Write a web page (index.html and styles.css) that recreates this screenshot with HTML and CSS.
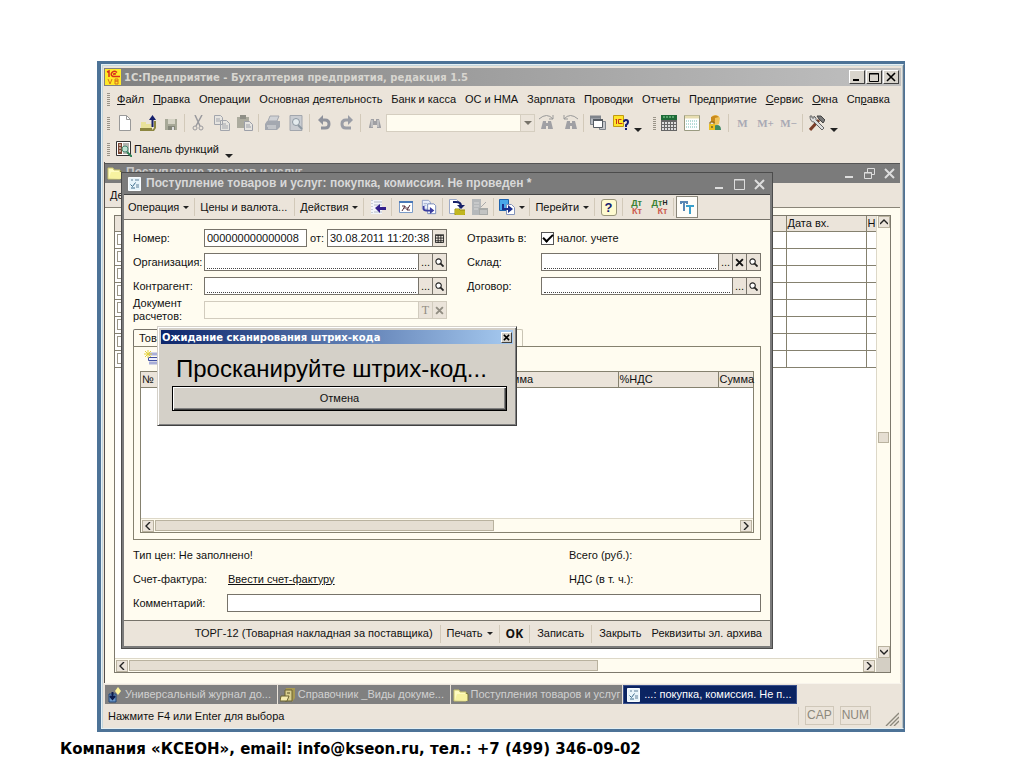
FILE: index.html
```html
<!DOCTYPE html>
<html lang="ru">
<head>
<meta charset="utf-8">
<title>1С:Предприятие - Бухгалтерия предприятия</title>
<link rel="stylesheet" href="styles.css">
</head>
<body>
<svg class="defs" aria-hidden="true">
  <symbol id="doc" viewBox="0 0 16 16"><path d="M1.500 1.500h12v13h-12z" fill="#e8f4fa" stroke="#f8fcff"/><path d="M4 4h2M8 4h4M9 9h3M9 11h3" stroke="#5d7f98"/><path d="M3.500 8.500l2 2 3-4M4 12h4" fill="none" stroke="#3a6a8a"/></symbol>
  <symbol id="folder" viewBox="0 0 16 16"><path d="M1 3h5l1 2h6v9H1z" fill="#fffbc0" stroke="#c9c36a"/><path d="M2 13l2-6h11v7z" fill="#f7f2a0"/><path d="M13 6l2 1v7" fill="none" stroke="#77733a"/></symbol>
  <symbol id="bino" viewBox="0 0 16 16"><path d="M4 4h3v2h2V4h3l2 8v1h-4v-3H6v3H2v-1z" fill="#a0a0a4"/><path d="M5 5v7M11 5v7" stroke="#dcdcdc"/></symbol>
  <symbol id="pages" viewBox="0 0 18 16"><path d="M1.500.500h7l2 2v8h-9z" fill="#e9effa" stroke="#8c9cc4"/><path d="M7.500 4.500h7l2 2v9h-9z" fill="#fff" stroke="#6c82b8"/><path d="M3 4h4M3 6h3" stroke="#a3b0d0"/><path d="M4 7v3q0 1 2 1h4V8l5 4-5 4v-3H6q-4 0-4-3V7z" fill="#3b3da0"/></symbol>
  <symbol id="lens" viewBox="0 0 10 10"><circle cx="4" cy="4" r="3" fill="#fff" stroke="#222" stroke-width="1.200"/><path d="M6 6l3.500 3.500" stroke="#222" stroke-width="2"/></symbol>
  <symbol id="cross" viewBox="0 0 8 8"><path d="M1 1l6 6M7 1L1 7" fill="none" stroke="currentColor" stroke-width="1.700"/></symbol>
  <symbol id="left" viewBox="0 0 8 8"><path d="M6 0L2 4l4 4" fill="none" stroke="#222" stroke-width="1.400"/></symbol>
  <symbol id="right" viewBox="0 0 8 8"><path d="M2 0l4 4-4 4" fill="none" stroke="#222" stroke-width="1.400"/></symbol>
  <symbol id="up" viewBox="0 0 8 8"><path d="M0 6l4-4 4 4" fill="none" stroke="#222" stroke-width="1.400"/></symbol>
  <symbol id="down" viewBox="0 0 8 8"><path d="M0 2l4 4 4-4" fill="none" stroke="#222" stroke-width="1.400"/></symbol>
</svg>

<main class="desktop">
<div class="app">
  <header class="app-title">
    <svg class="logo" viewBox="0 0 16 16"><path d="M0 0h16v16H0z" fill="#ffe928"/><path d="M2 3l2-1v6M12 3.500Q9 1 7 3.500T8 7.500h7M11 5q-3-1-2 1" fill="none" stroke="#d8301c" stroke-width="1.500"/><path d="M3 10l2 5 2-5M10 10h3v2h-3zM10 12h3v3h-3z" fill="none" stroke="#d8701c"/></svg>
    <h1>1С:Предприятие - Бухгалтерия предприятия, редакция 1.5</h1>
    <div class="win-buttons">
      <button aria-label="Свернуть"><svg viewBox="0 0 12 10"><path d="M2 8h6" stroke="#000" stroke-width="2"/></svg></button>
      <button aria-label="Развернуть"><svg viewBox="0 0 12 10"><path d="M1.500 1.500h9v8h-9zM1 2h10" fill="none" stroke="#000"/></svg></button>
      <button aria-label="Закрыть"><svg viewBox="0 0 12 10"><path d="M2 1l8 8M10 1L2 9" stroke="#000" stroke-width="1.600"/></svg></button>
    </div>
  </header>

  <nav class="bar menu">
    <i class="grip"></i>
    <div class="menu-items">
      <button><u>Ф</u>айл</button><button><u>П</u>равка</button><button>Операции</button><button>Основная деятельность</button><button>Банк и касса</button><button>ОС и НМА</button><button>Зарплата</button><button>Проводки</button><button>Отчеты</button><button>Предприятие</button><button><u>С</u>ервис</button><button><u>О</u>кна</button><button>Сп<u>р</u>авка</button>
    </div>
  </nav>

  <div class="bar tools">
    <i class="grip"></i>
    <button class="ib" aria-label="Новый"><svg viewBox="0 0 16 16"><path d="M2.500.500h7l4 4v11h-11z" fill="#fff" stroke="#999"/><path d="M9.500.500v4h4" fill="none" stroke="#999"/></svg></button>
    <button class="ib" aria-label="Открыть"><svg viewBox="0 0 16 16"><path d="M1 7h5v2h6v6H1z" fill="#e9e29a"/><path d="M0 15h12l2-2v-7l2 0v7l-2 3H0z" fill="#8c8640"/><path d="M0 13h12v2H0z" fill="#8c8640"/><path d="M12.500 12V2" stroke="#16206c" stroke-width="2"/><path d="M9 5l3.500-5L16 5z" fill="#16206c"/></svg></button>
    <button class="ib" aria-label="Сохранить"><svg viewBox="0 0 16 16"><path d="M2 4h12v11H2z" fill="#a7a897"/><path d="M5 4h7v5H5z" fill="#d5d3c5"/><path d="M5 11h7v4H5z" fill="#85877a"/><path d="M9 12h2v3H9z" fill="#ddd"/></svg></button>
    <i class="sep"></i>
    <button class="ib" aria-label="Вырезать"><svg viewBox="0 0 16 16"><path d="M4 0l5 11M11 0L5 11" stroke="#9a9a9e" stroke-width="1.500"/><circle cx="4" cy="13" r="2" fill="none" stroke="#9a9a9e"/><circle cx="10" cy="13" r="2" fill="none" stroke="#9a9a9e"/></svg></button>
    <button class="ib" aria-label="Копировать"><svg viewBox="0 0 16 16"><path d="M.500.500h6l2 2v7h-8zM6.500 5.500h6l3 3v7h-9z" fill="#e6e4e0" stroke="#a2a5ac"/><path d="M2 4h4M2 6h4M8 9h4M8 11h6M8 13h6" stroke="#a2a5ac"/></svg></button>
    <button class="ib" aria-label="Вставить"><svg viewBox="0 0 16 16"><path d="M0 2h12v11H0z" fill="#acab9e"/><path d="M3 0h6v4H3z" fill="#8f8f86"/><path d="M7.500 6.500h5l3 3v6h-8z" fill="#e6e4e0" stroke="#9c9fa8"/><path d="M9 10h4M9 12h5" stroke="#9c9fa8"/></svg></button>
    <i class="sep"></i>
    <button class="ib" aria-label="Печать"><svg viewBox="0 0 16 16"><path d="M5 1h9l-2 5H3z" fill="#d0d2d6" stroke="#a4a7ae"/><path d="M2 6h13v6l-3 3H0V9z" fill="#a4a8b0"/><path d="M2 11h9M3 13h8" stroke="#e0e0e0"/></svg></button>
    <button class="ib" aria-label="Просмотр"><svg viewBox="0 0 16 16"><path d="M2 .500h12v15H2z" fill="#c9ccd1" stroke="#a2a6ad"/><circle cx="8" cy="7" r="3.500" fill="#e4ebee" stroke="#8d98a2"/><path d="M10 10l4 4" stroke="#8d98a2" stroke-width="2"/></svg></button>
    <i class="sep"></i>
    <button class="ib" aria-label="Отменить"><svg viewBox="0 0 16 16"><path d="M5 5h4q4 0 4 4t-4 4H5" fill="none" stroke="#8f929c" stroke-width="3"/><path d="M7 0v10L2 5z" fill="#8f929c"/></svg></button>
    <button class="ib" aria-label="Вернуть"><svg viewBox="0 0 16 16"><path d="M10 5H7Q3 5 3 9t4 4h5" fill="none" stroke="#9a9da6" stroke-width="3"/><path d="M9 0v10l5-5z" fill="#9a9da6"/></svg></button>
    <i class="sep"></i>
    <button class="ib" aria-label="Найти"><svg><use href="#bino"/></svg></button>
    <div class="combo"><input type="text" aria-label="Поиск"><button aria-label="Список"><i class="tri"></i></button></div>
    <button class="ib" aria-label="Найти следующий"><svg viewBox="0 0 16 16"><path d="M0 4q8-7 14 0M14 0v4h-4" fill="none" stroke="#999"/><path d="M4 6h3v2h2V6h3l2 8H9v-3H7v3H2z" fill="#a0a0a4"/></svg></button>
    <button class="ib" aria-label="Найти предыдущий"><svg viewBox="0 0 16 16"><path d="M16 4q-8-7-14 0M2 0v4h4" fill="none" stroke="#999"/><path d="M5 6h3v2h2V6h3l2 8h-5v-3H8v3H3z" fill="#a0a0a4"/></svg></button>
    <i class="sep"></i>
    <button class="ib" aria-label="Окна"><svg viewBox="0 0 16 16"><path d="M.500 1.500h10v8H.500z" fill="#b6bac0" stroke="#80858c"/><path d="M0 2h11" stroke="#80858c" stroke-width="3"/><path d="M9.500 6.500h6v8h-6z" fill="#c6c8cc" stroke="#80858c"/><path d="M3.500 4.500h9v8h-9z" fill="#fff" stroke="#555b62"/><path d="M3 5h10" stroke="#555b62" stroke-width="2"/></svg></button>
    <button class="ib" aria-label="Справка 1С"><svg viewBox="0 0 16 16"><path d="M.500.500h10v11h-10z" fill="#ffe52a" stroke="#c09a10"/><path d="M2.500 5l1-1v5M8.500 4.500h-3v4h4" fill="none" stroke="#c8301c"/><path d="M11 7q0-2 2-2t2 2-2 3v2M13 13v2" fill="none" stroke="#141c70" stroke-width="2"/></svg></button>
    <i class="tri low"></i>
    <i class="grip second"></i>
    <button class="ib" aria-label="Калькулятор"><svg viewBox="0 0 16 16"><path d="M0 0h16v16H0z" fill="#666"/><path d="M0 0h16v5H0z" fill="#1f6a38"/><path d="M2 2h12" stroke="#8fe0a0" stroke-dasharray="2 1"/><path d="M1 8h14M1 11h14M1 14h14" stroke="#ddd" stroke-width="2" stroke-dasharray="2 1"/></svg></button>
    <button class="ib" aria-label="Календарь"><svg viewBox="0 0 16 16"><path d="M.500.500h15v15H.500z" fill="#fff" stroke="#999a80"/><path d="M1 2h14" stroke="#e7ddb0" stroke-width="3"/><path d="M2 6h12M2 9h12M2 12h12" stroke="#6fbcb0" stroke-dasharray="1 1"/></svg></button>
    <button class="ib" aria-label="Пользователь"><svg viewBox="0 0 16 16"><path d="M5 1q5-3 8 2l-1 6-4 2z" fill="#f1c45c"/><path d="M4 2q5-3 8 0l-4 1v5l-4-1z" fill="#c98a1c"/><path d="M6 15q0-5 4-5t4 5z" fill="#3f8a62"/><path d="M2 9h6v6H2z" fill="#ecc020"/><path d="M3 9V7h4v2" fill="none" stroke="#88600c"/><path d="M5 11v2" stroke="#333"/></svg></button>
    <i class="sep"></i>
    <button class="ib mem">M</button><button class="ib mem">M+</button><button class="ib mem">M−</button>
    <i class="sep"></i>
    <button class="ib" aria-label="Сервис"><svg viewBox="0 0 16 16"><path d="M1 15L10 5" stroke="#7a3d28" stroke-width="3"/><path d="M8 1h4l4 4-2 3-4-4z" fill="#777" stroke="#444"/><path d="M1 1l2 0 0 2 2 0 0-2q3 2 2 4l8 8-2 2-8-8q-4 0-4-6z" fill="#ddd" stroke="#666"/></svg></button>
    <i class="tri low"></i>
  </div>

  <div class="bar panel-bar">
    <i class="grip"></i>
    <button class="panel-button"><svg viewBox="0 0 16 16"><path d="M.500.500h14v14H.500z" fill="#fff" stroke="#333"/><path d="M2 2h4v11H2z" fill="#7a4632"/><path d="M4 3v9" stroke="#fff" stroke-dasharray="2 1"/><path d="M7 2h6v11H7z" fill="#b5b5b0"/><circle cx="9" cy="8" r="3" fill="#bfe4d2" stroke="#4a8a74"/><path d="M11 11l5 5" stroke="#2d7f54" stroke-width="2"/></svg><span>Панель функций</span></button>
    <i class="tri low"></i>
  </div>

  <section class="mdi">
    <div class="child">
      <header class="child-title">
        <svg class="ico"><use href="#folder"/></svg>
        <h2>Поступление товаров и услуг</h2>
        <button aria-label="Свернуть"><svg viewBox="0 0 12 12"><path d="M2 10h8" stroke="#ddd" stroke-width="2"/></svg></button>
        <button aria-label="Восстановить"><svg viewBox="0 0 12 12"><path d="M1.500 5.500h7v6h-7zM4.500 5V1.500h7v6H9M1 6h8" fill="none" stroke="#ddd"/></svg></button>
        <button aria-label="Закрыть"><svg viewBox="0 0 12 12"><path d="M2 2l9 9M11 2l-9 9" stroke="#ddd" stroke-width="2"/></svg></button>
      </header>
      <div class="child-tools"><button>Действия</button></div>
      <div class="child-body">
        <div class="list">
          <div class="list-area">
            <table class="rows">
              <thead><tr><th class="c-main"></th><th class="c-date">Дата вх.</th><th class="c-num">Н</th></tr></thead>
              <tbody>
                <tr><td><i class="mark"></i></td><td></td><td></td></tr>
                <tr><td><i class="mark"></i></td><td></td><td></td></tr>
                <tr><td><i class="mark"></i></td><td></td><td></td></tr>
                <tr><td><i class="mark"></i></td><td></td><td></td></tr>
                <tr><td><i class="mark"></i></td><td></td><td></td></tr>
                <tr><td><i class="mark"></i></td><td></td><td></td></tr>
                <tr><td><i class="mark"></i></td><td></td><td></td></tr>
                <tr><td><i class="mark"></i></td><td></td><td></td></tr>
              </tbody>
            </table>
          </div>
          <div class="vscroll"><button aria-label="Вверх"><svg><use href="#up"/></svg></button><i class="thumb"></i><button aria-label="Вниз"><svg><use href="#down"/></svg></button></div>
          <div class="hscroll"><button aria-label="Влево"><svg><use href="#left"/></svg></button><div class="track"><i class="thumb wide"></i></div><button aria-label="Вправо"><svg><use href="#right"/></svg></button></div>
          <i class="corner"></i>
        </div>
      </div>
    </div>

    <section class="docwin">
      <header class="doc-title">
        <svg class="ico"><use href="#doc"/></svg>
        <h2>Поступление товаров и услуг: покупка, комиссия. Не проведен *</h2>
        <button aria-label="Свернуть"><svg viewBox="0 0 12 12"><path d="M2 10h8" stroke="#ddd" stroke-width="2"/></svg></button>
        <button aria-label="Развернуть"><svg viewBox="0 0 12 12"><path d="M1.500 1.500h10v10h-10zM1 2h11" fill="none" stroke="#ddd"/></svg></button>
        <button aria-label="Закрыть"><svg viewBox="0 0 12 12"><path d="M2 2l9 9M11 2l-9 9" stroke="#ddd" stroke-width="2"/></svg></button>
      </header>
      <div class="doc-tools">
        <button>Операция<i class="tri"></i></button><i class="sep"></i>
        <button class="w-price">Цены и валюта...</button><i class="sep"></i>
        <button>Действия<i class="tri"></i></button><i class="sep"></i>
        <button class="ic" aria-label="Журнал"><svg viewBox="0 0 16 16"><path d="M1 1h11v14H1z" fill="#f4f6fa"/><path d="M2 1v14" stroke="#9aa4b4" stroke-dasharray="1 2"/><path d="M4 3h8M4 6h8M4 13h8" stroke="#b2bac8"/><path d="M5 9l5-4v3h6v3h-6v3z" fill="#33208c"/></svg></button><i class="sep"></i>
        <button class="ic" aria-label="Обновить"><svg viewBox="0 0 16 16"><path d="M1.500 2.500h13v11h-13z" fill="#fff" stroke="#7c9cc8"/><path d="M1 3h14" stroke="#4a78b8" stroke-width="2"/><path d="M4 7h3v3M9 8v3h3M7 7l-3 5M9 11l3-5" fill="none" stroke="#5a3040"/></svg></button>
        <button class="ic" aria-label="Скопировать"><svg><use href="#pages"/></svg></button><i class="sep"></i>
        <button class="ic" aria-label="Провести"><svg viewBox="0 0 16 16"><path d="M.500.500h7l3 3v11H.500z" fill="#fff" stroke="#9aa8c8"/><path d="M4 3h3q5 0 5 4" fill="none" stroke="#162068" stroke-width="2"/><path d="M8 6h8l-4 4z" fill="#162068"/><path d="M6 10h4l1 1h5v5H6z" fill="#e8dc30" stroke="#9a9010"/><path d="M7 12h8M7 14h8" stroke="#9a9010"/></svg></button>
        <button class="ic" aria-label="Отмена проведения"><svg viewBox="0 0 16 16"><path d="M0 0h9v16H0z" fill="#b5b8ba"/><path d="M2 4h5M2 7h5M2 10h4" stroke="#d8d8d8"/><path d="M7 9h9v7H7z" fill="#a8aaa8"/><path d="M8 12h7M8 14h7" stroke="#ddd"/><path d="M9 8l5-5" stroke="#aaa"/></svg></button><i class="sep"></i>
        <button class="ic drop" aria-label="Ввести на основании"><svg viewBox="0 0 16 16"><path d="M.500.500h9v11h-9z" fill="#49a8ea" stroke="#1c62ae"/><path d="M7.500 5.500h5l3 3v7h-8z" fill="#fff" stroke="#8494bc"/><path d="M3 5h2v4h4V6l5 4-5 4v-3H3z" fill="#1b2f8c"/></svg><i class="tri"></i></button><i class="sep"></i>
        <button>Перейти<i class="tri"></i></button><i class="sep"></i>
        <button class="ic" aria-label="Справка"><span class="help">?</span></button><i class="sep"></i>
        <button class="ic dk"><b>Дт</b><em>Кт</em></button>
        <button class="ic dk"><b>Дт<span>Н</span></b><em>Кт</em></button><i class="sep"></i>
        <button class="tt" aria-label="Табло"><svg viewBox="0 0 16 16"><path d="M1 3h8M5 3v9M2 3v2M8 3v2" fill="none" stroke="#5a87b4" stroke-width="2"/><path d="M7 7h8M11 7v8" fill="none" stroke="#3aa0cc" stroke-width="2"/></svg></button>
      </div>

      <div class="doc-body">
        <div class="form">
          <label for="num">Номер:</label>
          <div class="pair">
            <input id="num" class="box num" type="text" value="000000000000008">
            <label for="date">от:</label>
            <div class="field date"><input id="date" type="text" value="30.08.2011 11:20:38"><button aria-label="Календарь"><svg viewBox="0 0 10 10"><path d="M.500 1.500h9v8h-9zM0 1h10M3.500 1v9M6.500 1v9M0 4.500h10M0 7.500h10" fill="none" stroke="#222"/></svg></button></div>
          </div>
          <span class="lbl">Отразить в:</span>
          <label class="check"><input type="checkbox" checked>налог. учете</label>

          <label for="org">Организация:</label>
          <div class="field req"><input id="org" type="text"><button>...</button><button aria-label="Открыть"><svg><use href="#lens"/></svg></button></div>
          <label for="store">Склад:</label>
          <div class="field req"><input id="store" type="text"><button>...</button><button aria-label="Очистить"><svg><use href="#cross"/></svg></button><button aria-label="Открыть"><svg><use href="#lens"/></svg></button></div>

          <label for="agent">Контрагент:</label>
          <div class="field req"><input id="agent" type="text"><button>...</button><button aria-label="Открыть"><svg><use href="#lens"/></svg></button></div>
          <label for="deal">Договор:</label>
          <div class="field req"><input id="deal" type="text"><button>...</button><button aria-label="Открыть"><svg><use href="#lens"/></svg></button></div>

          <label for="calc" class="two">Документ расчетов:</label>
          <div class="field off"><input id="calc" type="text" disabled><button class="t">T</button><button aria-label="Очистить"><svg><use href="#cross"/></svg></button></div>
        </div>

        <div class="tabs"><button class="tab on">Товары</button><button class="tab rest" aria-label="Дополнительно"></button></div>
        <div class="sheet">
          <div class="sheet-tools"><button aria-label="Добавить"><svg viewBox="0 0 16 16"><path d="M5 4h11M5 13h11" stroke="#a9aed8" stroke-width="3"/><path d="M4.500 7.500h12v3h-12z" fill="#eef" stroke="#4050a0"/><path d="M4 0v8M0 4h8M1 1l6 6M7 1L1 7" stroke="#e5d23a"/></svg></button></div>
          <div class="grid-box">
            <table class="goods"><thead><tr><th class="g-n">№</th><th class="g-name"></th><th class="g-sum">Сумма</th><th class="g-vat">%НДС</th><th>Сумма</th></tr></thead></table>
            <div class="hscroll"><button aria-label="Влево"><svg><use href="#left"/></svg></button><div class="track"><i class="thumb half"></i></div><button aria-label="Вправо"><svg><use href="#right"/></svg></button></div>
          </div>
        </div>

        <div class="totals">
          <span>Тип цен: Не заполнено!</span><span>Всего (руб.):</span>
          <span class="inv"><span>Счет-фактура:</span><a href="#invoice">Ввести счет-фактуру</a></span><span>НДС (в т. ч.):</span>
        </div>
        <div class="comment"><label for="note">Комментарий:</label><input id="note" class="box" type="text"></div>
      </div>
      <footer class="doc-foot">
        <button>ТОРГ-12 (Товарная накладная за поставщика)</button><i class="sep"></i>
        <button class="print">Печать<i class="tri"></i></button><i class="sep"></i>
        <button class="ok">OK</button><i class="sep"></i>
        <button>Записать</button><i class="sep"></i>
        <button>Закрыть</button>
        <button>Реквизиты эл. архива</button>
      </footer>
    </section>

    <section class="modal" role="dialog" aria-label="Ожидание сканирования штрих-кода">
      <header class="modal-title"><h2>Ожидание сканирования штрих-кода</h2><button aria-label="Закрыть"><svg><use href="#cross"/></svg></button></header>
      <div class="modal-body">
        <p>Просканируйте штрих-код...</p>
        <button class="cancel">Отмена</button>
      </div>
    </section>
  </section>

  <nav class="tasks">
    <button><svg viewBox="0 0 16 16"><path d="M2 7h7v8H2z" fill="#6a96c8" stroke="#244878"/><path d="M5.500 5v6M3 9l2.500 3L8 9" fill="none" stroke="#0c1c4c" stroke-width="2"/><path d="M11 0l3 4-3 4-3-4z" fill="#fff69a"/></svg><span>Универсальный журнал до...</span></button>
    <button><svg viewBox="0 0 16 16"><path d="M6 1h9v10l-3 4V4H5z" fill="#a89a52"/><path d="M5 3h7v11H5z" fill="#d9cf8e" stroke="#6a6230"/><path d="M1 9h8l-2 5H0z" fill="#f4ecb0" stroke="#6a6230"/><path d="M7 6h3" stroke="#554e20"/></svg><span>Справочник _Виды докуме...</span></button>
    <button><svg><use href="#folder"/></svg><span>Поступления товаров и услуг</span></button>
    <button class="active"><svg><use href="#doc"/></svg><span>...: покупка, комиссия. Не п...</span></button>
  </nav>
  <footer class="status">
    <span class="hint">Нажмите F4 или Enter для выбора</span><span class="key">CAP</span><span class="key">NUM</span>
    <svg class="size-grip" viewBox="0 0 14 14"><path d="M1 14L14 1M5 14l9-9M9 14l5-5" stroke="#8c887c" stroke-width="1.400"/></svg>
  </footer>
</div>
</main>
<p class="caption">Компания «КСЕОН», email: info@kseon.ru, тел.: +7 (499) 346-09-02</p>
</body>
</html>
```
FILE: styles.css
```css
* { box-sizing: border-box; }
body { margin: 0; background: #fff; color: #111; font: 11px/13px "Liberation Sans", Arial, sans-serif; }
button { margin: 0; padding: 0; border: 0; background: none; font: inherit; color: inherit; display: flex; align-items: center; justify-content: center; white-space: nowrap; }
input { font: inherit; color: inherit; margin: 0; min-width: 0; }
h1, h2, p { margin: 0; font-size: 11px; white-space: nowrap; }
svg { width: 16px; height: 16px; flex: none; display: block; }
.defs { display: none; }

.desktop { margin: 61px 119px 0 97px; padding: 3px 1px 3px 4px; background: #4d7397; }
.app { background: #ebe4da; border: 1px solid #e4f0f4; border-right-color: #66798c; padding: 3px 2px 0; box-shadow: inset 1px 1px #c4d6dc, inset -1px 0 #b8c6cc; }

.app-title { display: flex; align-items: center; gap: 3px; height: 18px; padding: 0 2px 0 1px; background: linear-gradient(90deg, #808080, #c0c0c0); color: #d8d6d0; }
.app-title h1 { flex: 1; font: bold 10px/13px "DejaVu Sans", Verdana, sans-serif; }
.win-buttons { display: flex; gap: 1px; }
.win-buttons button { width: 16px; height: 14px; background: #d8d4cc; border: 1px solid; border-color: #fff #404040 #404040 #fff; }
.win-buttons svg { width: 12px; height: 10px; }

.bar { display: flex; align-items: center; height: 25px; }
.grip { width: 3px; height: 13px; margin: 0 6px 0 3px; flex: none; background: repeating-linear-gradient(#9a9488 0 1px, transparent 1px 2px); }
.tools .grip { margin-right: 3px; }
.tools .grip.second { margin: 0 1px 0 9px; }
.menu { padding-top: 1px; }
.menu-items { flex: 1; display: flex; justify-content: space-between; padding: 0 11px 0 1px; }
.tools { padding-bottom: 1px; }
.ib { width: 23px; height: 22px; flex: none; }
.sep { width: 1px; height: 18px; margin: 0 2px; flex: none; background: #d2c9b9; }
.tri { border: solid transparent; border-width: 3px 3px 0; border-top-color: #222; width: 0; height: 0; flex: none; }
.tri.low { border-width: 4px 4px 0; margin: 14px 2px 0; }
.combo { display: flex; width: 149px; height: 18px; border: 1px solid #d5cec0; background: #fffcf0; }
.combo input { flex: 1; border: 0; padding: 0; background: none; }
.combo button { width: 14px; background: #ebe4da; border-left: 1px solid #d5cec0; }
.combo .tri { border-width: 4px 4px 0; border-top-color: #77736a; }
.mem { font: bold 11px/13px "Liberation Serif", serif; color: #a9a9b4; }
.panel-bar { height: 26px; }
.panel-button { gap: 2px; }
.panel-bar .tri { margin-left: 6px; }

.mdi { position: relative; height: 521px; padding: 1px 1px 0 0; border-left: 1px solid #55504c; }
.child { height: 100%; display: flex; flex-direction: column; background: #fffcf0; }
.child-title { height: 20px; background: #7b7b7b; border-top: 1px solid #555; display: flex; align-items: center; gap: 8px; padding: 0 5px 2px 2px; color: #c8c8c8; }
.child-title h2 { flex: 1; margin-left: -5px; font-size: 12px; }
.child-title svg, .doc-title svg { width: 12px; height: 12px; }
.child-title .ico, .doc-title .ico { width: 16px; height: 16px; }
.child-tools { height: 25px; background: #ebe4da; border-bottom: 1px solid #8a8578; display: flex; align-items: center; padding-left: 5px; }
.child-body { flex: 1; display: flex; padding: 7px 9px 10px 9px; }
.list { flex: 1; display: grid; grid-template-columns: 1fr 14px; grid-template-rows: 1fr 14px; border: 1px solid #7d796c; background: #fff; }
.list-area { overflow: hidden; }
.rows, .goods { border-collapse: collapse; table-layout: fixed; width: 100%; }
.rows th { height: 15px; }
.rows td { height: 17px; padding: 0 0 0 2px; border: 1px solid #85816f; border-left-width: 0; border-right-width: 1px; }
.rows th, .goods th { background: #ebe4da; font-weight: normal; text-align: left; padding: 0 0 0 1px; border-right: 1px solid #85816f; border-bottom: 1px solid #85816f; white-space: nowrap; }
.rows th:last-child, .rows td:last-child, .goods th:last-child { border-right: 0; }
.c-date { width: 80px; }
.c-num { width: 10px; }
.mark { display: block; width: 9px; height: 11px; border: 1px solid #9a9686; }
.vscroll { display: flex; flex-direction: column; justify-content: space-between; align-items: center; background: #fffcf0; border-left: 1px solid #ddd8c8; }
.vscroll button, .hscroll button { width: 12px; height: 12px; background: #ebe4da; border: 1px solid #b9b29f; flex: none; }
.vscroll svg, .hscroll svg { width: 8px; height: 8px; }
.thumb { display: block; width: 11px; height: 11px; background: #e5ded2; border: 1px solid #b9b29f; }
.hscroll { display: flex; align-items: center; gap: 1px; padding: 0 1px; height: 14px; background: #fffcf0; border-top: 1px solid #ddd8c8; }
.track { flex: 1; }
.thumb.wide { width: 64%; }
.thumb.half { width: 58%; }
.corner { background: #d4cfc4; }

.docwin { position: absolute; left: 16px; top: 10px; width: 652px; background: #fffcf0; border: 3px solid #7b7b7b; border-top-width: 1px; border-top-color: #c8c8c8; outline: 1px solid #4c4c4c; outline-offset: -1px; }
.doc-title { height: 22px; background: #7b7b7b; display: flex; align-items: center; gap: 8px; padding: 0 5px 0 3px; color: #d8d8d8; border-bottom: 1px solid #444; }
.doc-title h2 { flex: 1; margin-left: -5px; font-size: 12px; }
.doc-tools { height: 25px; display: flex; align-items: center; background: #ebe4da; border-bottom: 1px solid #77736a; padding-left: 1px; }
.doc-tools button { padding: 0 3px; gap: 4px; }
.doc-tools .w-price { padding-right: 5px; }
.doc-tools .ic { width: 23px; height: 22px; }
.doc-tools .drop { width: 31px; }
.help { width: 16px; height: 17px; border: 1px solid #99957a; border-radius: 3px; background: #fffbd0; color: #141c70; font: bold 13px/15px "Liberation Sans", sans-serif; text-align: center; }
.doc-tools .dk { display: grid; gap: 0; padding: 0; align-content: center; font: bold 9px/8px "Liberation Sans", sans-serif; }
.dk b { color: #3a8034; text-align: left; }
.dk em { font-style: normal; color: #cc5b4e; text-align: right; }
.dk span { color: #222; font-size: 7px; vertical-align: top; }
.doc-tools .tt { width: 22px; height: 22px; background: #fffdf8; border: 1px solid #8a867a; padding: 0; }

.doc-body { padding: 9px 9px 8px 9px; }
.form { display: grid; grid-template-columns: 71px 243px 94px 1fr; row-gap: 6px; grid-auto-rows: 18px; align-items: center; }
.form > :nth-child(4n+3) { margin-left: 20px; white-space: nowrap; }
.two { width: 56px; }
.pair { display: flex; align-items: center; justify-content: space-between; }
.box { height: 18px; border: 1px solid #77736a; background: #fff; padding: 0 2px; }
.num { width: 103px; }
.field { display: flex; height: 18px; border: 1px solid #77736a; background: #fff; }
.field input { flex: 1; border: 0; padding: 0 2px; background: none; }
.field.req input { border-bottom: 1px dotted #444; margin: 0 2px 1px; }
.field button { width: 14px; flex: none; background: #ebe4da; border-left: 1px solid #77736a; }
.field svg { width: 9px; height: 9px; }
.date { width: 120px; }
.field.off { border-color: #d2ccbe; background: #fffcf0; color: #918d82; }
.field.off button { border-color: #d2ccbe; }
.field .t { font: 12px/13px "Liberation Serif", serif; }
.check { display: flex; align-items: center; gap: 3px; }
.check input { appearance: none; width: 13px; height: 13px; border: 1px solid #555; background: #fff; display: grid; place-items: center; }
.check input:checked::before { content: ""; width: 8px; height: 4px; border: solid #000; border-width: 0 0 2px 2px; transform: rotate(-45deg); margin-bottom: 3px; }

.tabs { display: flex; height: 17px; margin-top: 10px; }
.tab { border: 1px solid #a9a493; border-bottom: 0; border-radius: 2px 2px 0 0; padding: 0 5px; }
.tab.on { border-color: #77736a; }
.tab.rest { width: 340px; border-color: #c9c4b4; }
.sheet { border: 1px solid #85816f; padding: 3px 6px 6px; }
.sheet-tools { height: 21px; display: flex; align-items: flex-start; padding-left: 4px; }
.grid-box { height: 162px; display: flex; flex-direction: column; justify-content: space-between; border: 1px solid #85816f; background: #fff; }
.goods th { height: 15px; }
.goods .g-n { width: 30px; }
.goods .g-sum { width: 121px; }
.goods .g-vat { width: 100px; }
.goods th:last-child { width: 35px; }
.totals { display: grid; grid-template-columns: 436px 1fr; row-gap: 6px; grid-auto-rows: 18px; align-items: center; margin-top: 6px; }
.inv { display: grid; grid-template-columns: 95px 1fr; }
.inv a { color: inherit; }
.comment { display: grid; grid-template-columns: 94px 1fr; align-items: center; margin-top: 6px; }
.doc-foot { height: 26px; display: flex; align-items: center; justify-content: flex-end; background: #ebe4da; border-top: 1px solid #77736a; padding-right: 3px; }
.doc-foot button { padding: 0 5px; gap: 4px; }
.doc-foot .print { padding: 0 4px; }
.doc-foot .ok { padding: 0 4px; font: bold 12px/13px "Open Sans", sans-serif; }

.modal { position: absolute; left: 52px; top: 164px; width: 360px; height: 100px; background: #d4d0c8; border: 1px solid; border-color: #d4d0c8 #404040 #404040 #d4d0c8; box-shadow: inset 1px 1px #fff, inset -1px -1px #808080; padding: 3px 3px; }
.modal-title { height: 14px; display: flex; align-items: center; justify-content: space-between; padding: 0 1px; background: linear-gradient(90deg, #0c256b, #a6caf0); color: #fff; }
.modal-title h2 { font: bold 10px/13px "DejaVu Sans", Verdana, sans-serif; }
.modal-title button { width: 11px; height: 11px; background: #d4d0c8; border: 1px solid; border-color: #fff #404040 #404040 #fff; color: #000; }
.modal-title svg { width: 7px; height: 7px; }
.modal-body { padding: 12px 6px 0 11px; }
.modal p { font-size: 24px; line-height: 26px; padding-left: 4px; margin-bottom: 4px; color: #000; }
.cancel { width: 100%; height: 25px; background: #d4d0c8; border: 1px solid #000; box-shadow: inset 1px 1px #fff, inset -1px -1px #404040, inset -2px -2px #808080; }

.tasks { height: 22px; display: flex; gap: 1px; padding: 1px 104px 1px 1px; border-top: 1px solid #f8f4ec; }
.tasks button { flex: 1; min-width: 0; justify-content: flex-start; gap: 2px; padding-left: 2px; background: #808080; color: #d0d0d0; overflow: hidden; }
.tasks .active { background: #0b2462; color: #fff; border: 1px solid #39508c; }
.status { height: 23px; display: flex; align-items: center; gap: 6px; padding: 0 2px 2px 4px; }
.hint { flex: 1; line-height: 18px; border-right: 1px solid #d2cabc; }
.key { height: 19px; padding: 0 1px; border: 1px solid #cfc7b9; color: #8c887c; font-size: 12px; line-height: 17px; }
.size-grip { width: 14px; height: 14px; margin: 6px 0 0 8px; }
.caption { margin: 8px 0 0 60px; font: bold 15px/18px "DejaVu Sans", Verdana, sans-serif; color: #000; }
```
